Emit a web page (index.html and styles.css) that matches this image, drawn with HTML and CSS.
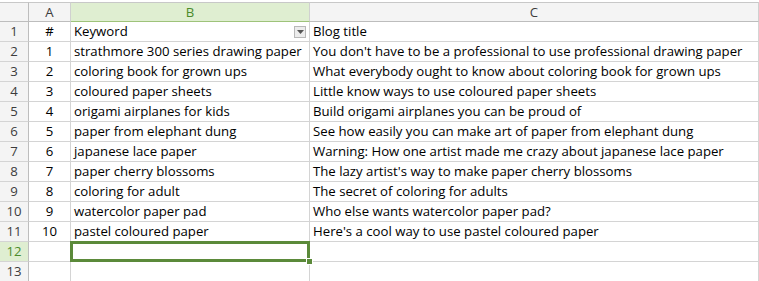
FILE: index.html
```html
<!DOCTYPE html>
<html>
<head>
<meta charset="utf-8">
<link rel="stylesheet" href="styles.css">
</head>
<body>
<div class="sheet">
  <div class="row head">
    <div class="rh corner"></div>
    <div class="ch ca">A</div>
    <div class="ch cb sel">B</div>
    <div class="ch cc">C</div>
  </div>
  <div class="row">
    <div class="rh">1</div>
    <div class="c ca ctr">#</div>
    <div class="c cb filt">Keyword<span class="dd"><svg width="7" height="4" viewBox="0 0 7 4"><path d="M0 0h7L3.5 4z" fill="#555"/></svg></span></div>
    <div class="c cc">Blog title</div>
  </div>
  <div class="row"><div class="rh">2</div><div class="c ca ctr">1</div><div class="c cb">strathmore 300 series drawing paper</div><div class="c cc">You don't have to be a professional to use professional drawing paper</div></div>
  <div class="row"><div class="rh">3</div><div class="c ca ctr">2</div><div class="c cb">coloring book for grown ups</div><div class="c cc">What everybody ought to know about coloring book for grown ups</div></div>
  <div class="row"><div class="rh">4</div><div class="c ca ctr">3</div><div class="c cb">coloured paper sheets</div><div class="c cc">Little know ways to use coloured paper sheets</div></div>
  <div class="row"><div class="rh">5</div><div class="c ca ctr">4</div><div class="c cb">origami airplanes for kids</div><div class="c cc">Build origami airplanes you can be proud of</div></div>
  <div class="row"><div class="rh">6</div><div class="c ca ctr">5</div><div class="c cb">paper from elephant dung</div><div class="c cc">See how easily you can make art of paper from elephant dung</div></div>
  <div class="row"><div class="rh">7</div><div class="c ca ctr">6</div><div class="c cb">japanese lace paper</div><div class="c cc">Warning: How one artist made me crazy about japanese lace paper</div></div>
  <div class="row"><div class="rh">8</div><div class="c ca ctr">7</div><div class="c cb">paper cherry blossoms</div><div class="c cc">The lazy artist's way to make paper cherry blossoms</div></div>
  <div class="row"><div class="rh">9</div><div class="c ca ctr">8</div><div class="c cb">coloring for adult</div><div class="c cc">The secret of coloring for adults</div></div>
  <div class="row"><div class="rh">10</div><div class="c ca ctr">9</div><div class="c cb">watercolor paper pad</div><div class="c cc">Who else wants watercolor paper pad?</div></div>
  <div class="row"><div class="rh">11</div><div class="c ca ctr">10</div><div class="c cb">pastel coloured paper</div><div class="c cc">Here's a cool way to use pastel coloured paper</div></div>
  <div class="row"><div class="rh selrow">12</div><div class="c ca"></div><div class="c cb active"><span class="handle"></span></div><div class="c cc"></div></div>
  <div class="row"><div class="rh">13</div><div class="c ca"></div><div class="c cb"></div><div class="c cc"></div></div>
</div>
</body>
</html>
```
FILE: styles.css
```css
html, body { margin: 0; padding: 0; background: #fff; }
body { font-family: "Open Sans", "Liberation Sans", sans-serif; font-size: 13.2px; color: #000; overflow: hidden; }
.sheet { padding-top: 2px; display: flex; flex-direction: column; }
.row { display: grid; grid-template-columns: 29px 42px 239px 449px; height: 20px; }
.row > div { box-sizing: border-box; height: 20px; border-right: 1px solid #d4d4d4; border-bottom: 1px solid #d4d4d4; line-height: 19px; white-space: nowrap; overflow: visible; position: relative; }
.head > div { background: #f4f4f4; border-top: 1px solid #c8c8c8; border-bottom: 1px solid #bdbdbd; border-right: 1px solid #d0d0d0; text-align: center; color: #3c3c3c; line-height: 18px; }
.head .sel { background: #dfeed1; color: #4b8b2b; border-bottom: 1px solid #9ec37a; }
.rh { background: #f4f4f4; text-align: center; color: #3c3c3c; border-right: 1px solid #bdbdbd !important; }
.rh.selrow { background: #dfeed1; color: #4b8b2b; }
.c { padding-left: 3px; }
.ctr { text-align: center; padding-left: 0; }
.filt .dd { position: absolute; right: 3px; top: 4px; width: 12px; height: 12px; box-sizing: border-box; border: 1px solid #b8b8b8; background: #ececec; display: flex; align-items: center; justify-content: center; }
.active::after { content: ""; position: absolute; left: -1px; top: -1px; right: -1px; bottom: -1px; border: 3px solid #5b8a3a; }
.handle { position: absolute; right: -4px; bottom: -4px; width: 5px; height: 5px; background: #5b8a3a; border: 1px solid #fff; z-index: 2; }
```
